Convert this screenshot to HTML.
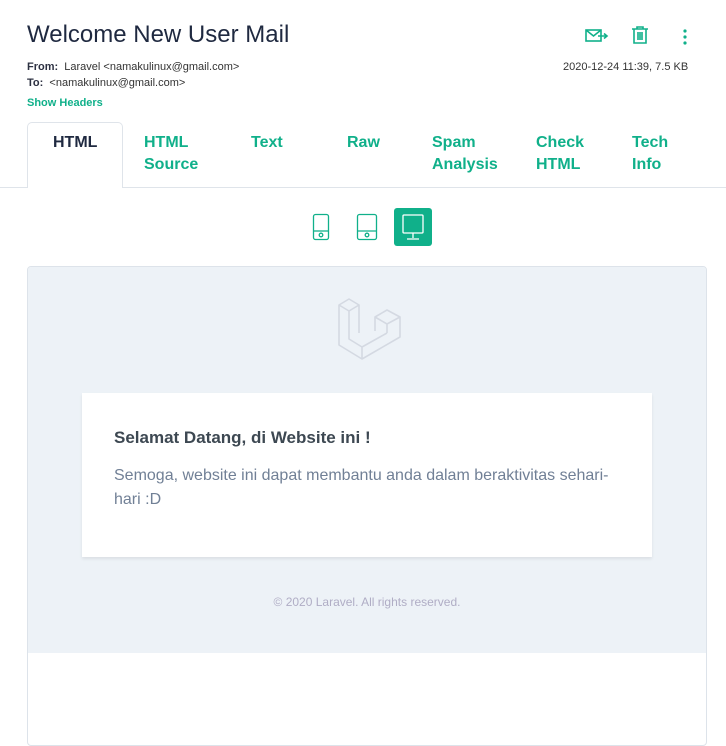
<!DOCTYPE html>
<html><head><meta charset="utf-8"><style>
*{margin:0;padding:0;box-sizing:border-box}
body{width:726px;height:733px;overflow:hidden;background:#fff;font-family:"Liberation Sans",sans-serif;position:relative;color:#1f2940}
.a{position:absolute;white-space:nowrap}
.tab{position:absolute;top:132px;font-size:16px;font-weight:bold;color:#10b08a;line-height:22px}
</style></head><body>
<div class="a" style="left:27px;top:21px;font-size:24px;color:#1f2940">Welcome New User Mail</div>
<div class="a" style="left:27px;top:61px;font-size:11px;color:#333"><b style="color:#2d3142">From:</b>&nbsp; Laravel &lt;namakulinux@gmail.com&gt;</div>
<div class="a" style="left:27px;top:77px;font-size:11px;color:#333"><b style="color:#2d3142">To:</b>&nbsp; &lt;namakulinux@gmail.com&gt;</div>
<div class="a" style="left:27px;top:97px;font-size:11px;font-weight:bold;color:#10b08a">Show Headers</div>
<div class="a" style="left:563px;top:61px;font-size:11px;color:#333">2020-12-24 11:39, 7.5 KB</div>
<svg class="a" style="left:584px;top:26px" width="26" height="20" viewBox="0 0 26 20" fill="none" stroke="#10b08a" stroke-width="1.6"><rect x="2" y="4" width="15" height="11"/><path d="M2 4l7.5 6 7.5-6M14 10h8M20 7.5l3 2.5-3 2.5"/></svg>
<svg class="a" style="left:631px;top:25px" width="18" height="20" viewBox="0 0 18 20" fill="none" stroke="#10b08a" stroke-width="1.6"><path d="M1 4h16M6 4V2h6v2M3 4v14h12V4M7 7v8M9 7v8M11 7v8"/></svg>
<svg class="a" style="left:682px;top:28px" width="6" height="18"><circle cx="3" cy="3" r="1.6" fill="#10b08a"/><circle cx="3" cy="9" r="1.6" fill="#10b08a"/><circle cx="3" cy="15" r="1.6" fill="#10b08a"/></svg>
<div class="a" style="left:0;top:187px;width:726px;height:1px;background:#dfe4ea"></div>
<div class="a" style="left:27px;top:122px;width:96px;height:66px;border:1px solid #dfe4ea;border-bottom:none;border-radius:5px 5px 0 0;background:#fff"></div>
<div class="tab" style="left:53px;color:#1f2940">HTML</div>
<div class="tab" style="left:144px">HTML<br>Source</div>
<div class="tab" style="left:251px">Text</div>
<div class="tab" style="left:347px">Raw</div>
<div class="tab" style="left:432px">Spam<br>Analysis</div>
<div class="tab" style="left:536px">Check<br>HTML</div>
<div class="tab" style="left:632px">Tech<br>Info</div>
<svg class="a" style="left:312px;top:213px" width="18" height="28" fill="none" stroke="#10b08a" stroke-width="1.3"><rect x="1.5" y="1.5" width="15" height="25" rx="2"/><path d="M2 18h14"/><circle cx="9" cy="22" r="1.8"/></svg>
<svg class="a" style="left:356px;top:213px" width="22" height="28" fill="none" stroke="#10b08a" stroke-width="1.3"><rect x="1.5" y="1.5" width="19" height="25" rx="2"/><path d="M2 18h18"/><circle cx="11" cy="22" r="1.8"/></svg>
<div class="a" style="left:394px;top:208px;width:38px;height:38px;background:#10b08a;border-radius:3px"></div>
<svg class="a" style="left:394px;top:208px" width="38" height="38" fill="none" stroke="#fff" stroke-width="1.3"><rect x="9" y="7" width="20" height="18" rx="1"/><path d="M19 25v5M13 31h12"/></svg>
<div class="a" style="left:27px;top:266px;width:680px;height:480px;border:1px solid #dde3ea;border-radius:4px;background:#fff;overflow:hidden">
<div style="height:386px;background:#edf2f7"></div></div>
<svg class="a" style="left:336px;top:295px" width="68" height="68" viewBox="0 0 68 68" fill="none" stroke="#d4d9e2" stroke-width="1.6" stroke-linejoin="round"><path d="M3 10L13 4 23 10 13 16ZM3 10V50L26 64 64 42V22M13 16V44L26 52 51 38M23 10V38M26 64V52M39 22L51 15 64 22 51 29ZM39 22V36M51 29V38"/></svg>
<div class="a" style="left:82px;top:393px;width:570px;height:164px;background:#fff;box-shadow:0 2px 3px rgba(0,0,0,.08)"></div>
<div class="a" style="left:114px;top:428px;font-size:17px;font-weight:bold;color:#3d4852">Selamat Datang, di Website ini !</div>
<div class="a" style="left:114px;top:464px;width:500px;white-space:normal;font-size:16px;line-height:24px;color:#718096">Semoga, website ini dapat membantu anda dalam beraktivitas sehari-hari :D</div>
<div class="a" style="left:0;width:734px;text-align:center;top:595px;font-size:12px;color:#b0adc5">© 2020 Laravel. All rights reserved.</div>
</body></html>
